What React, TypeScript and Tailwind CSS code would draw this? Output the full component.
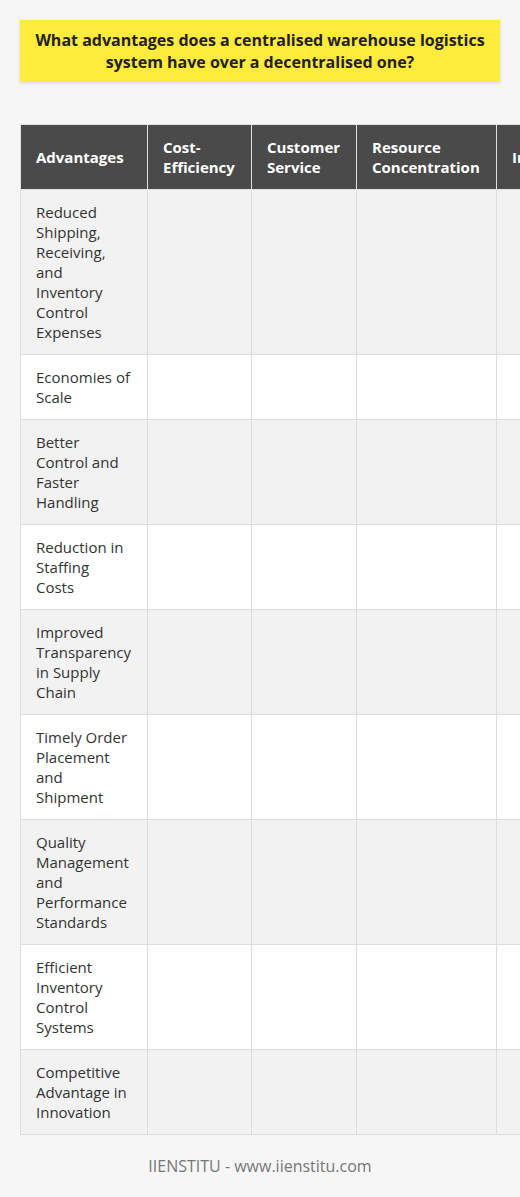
import React from "react";

const rows = [
  "Reduced Shipping, Receiving, and Inventory Control Expenses",
  "Economies of Scale",
  "Better Control and Faster Handling",
  "Reduction in Staffing Costs",
  "Improved Transparency in Supply Chain",
  "Timely Order Placement and Shipment",
  "Quality Management and Performance Standards",
  "Efficient Inventory Control Systems",
  "Competitive Advantage in Innovation",
];

const headers = ["Advantages", "Cost-Efficiency", "Customer Service", "Resource Concentration", "Innovation"];

export default function App() {
  return (
    <div
      className="min-h-[1197px] w-[520px] overflow-hidden bg-[#f6f6f6] px-5 pt-5"
      style={{ fontFamily: '"Open Sans", "Noto Sans", sans-serif' }}
    >
      <div className="bg-[#ffeb3b] px-2 py-[9px] text-center text-[16px] font-bold leading-[22px] text-[#222] shadow-[0_1px_3px_rgba(0,0,0,0.15)]">
        What advantages does a centralised warehouse logistics system have over a decentralised one?
      </div>
      <div className="mt-[42px] w-[700px]">
        <table className="w-[676px] table-fixed border-collapse text-left text-[15px] leading-5">
          <colgroup>
            <col className="w-[127px]" />
            <col className="w-[104px]" />
            <col className="w-[105px]" />
            <col className="w-[140px]" />
            <col className="w-[200px]" />
          </colgroup>
          <thead>
            <tr className="bg-[#4a4a4a] text-white">
              {headers.map((h) => (
                <th
                  key={h}
                  className="border border-[#e0e0e0] px-[15px] py-3 align-middle font-bold"
                >
                  {h === "Cost-Efficiency" ? (
                    <>
                      Cost-
                      <br />
                      Efficiency
                    </>
                  ) : (
                    h
                  )}
                </th>
              ))}
            </tr>
          </thead>
          <tbody>
            {rows.map((r, i) => (
              <tr key={r} className={i % 2 === 0 ? "bg-[#f2f2f2]" : "bg-white"}>
                <td className="border border-[#dddddd] py-3 pl-[15px] pr-[17px] align-middle text-[#333]">{r}</td>
                <td className="border border-[#dddddd] px-[15px] py-3"></td>
                <td className="border border-[#dddddd] px-[15px] py-3"></td>
                <td className="border border-[#dddddd] px-[15px] py-3"></td>
                <td className="border border-[#dddddd] px-[15px] py-3"></td>
              </tr>
            ))}
          </tbody>
        </table>
      </div>
      <div className="mt-[19px] w-[480px] text-center text-[16px] leading-6 text-[#777]">
        IIENSTITU - www.iienstitu.com
      </div>
    </div>
  );
}
